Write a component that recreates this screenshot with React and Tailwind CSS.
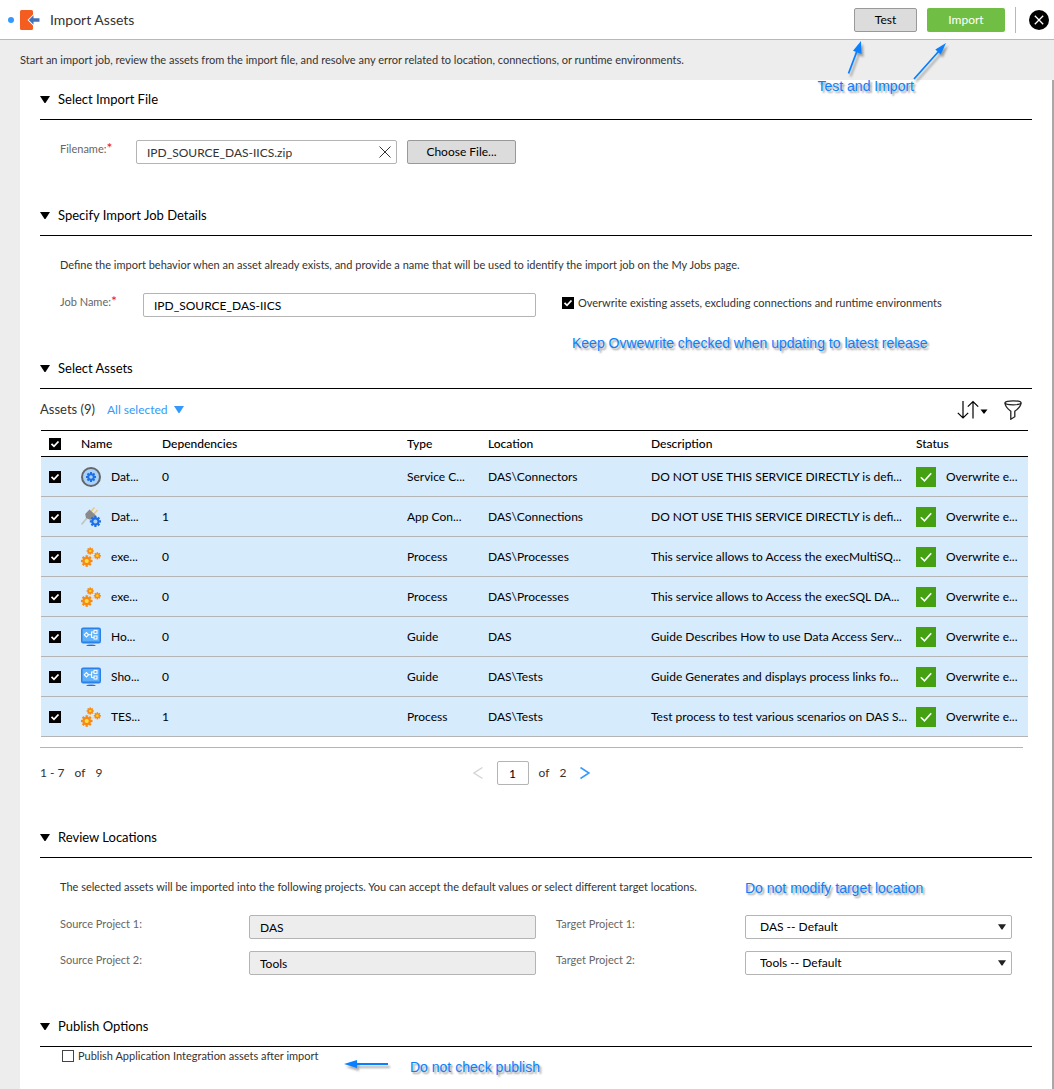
import React from "react";

const assets = [
  { icon: "service", name: "Dat...", deps: "0", type: "Service C...", location: "DAS\\Connectors", description: "DO NOT USE THIS SERVICE DIRECTLY is defi..." },
  { icon: "connection", name: "Dat...", deps: "1", type: "App Con...", location: "DAS\\Connections", description: "DO NOT USE THIS SERVICE DIRECTLY is defi..." },
  { icon: "process", name: "exe...", deps: "0", type: "Process", location: "DAS\\Processes", description: "This service allows to Access the execMultiSQ..." },
  { icon: "process", name: "exe...", deps: "0", type: "Process", location: "DAS\\Processes", description: "This service allows to Access the execSQL DA..." },
  { icon: "guide", name: "Ho...", deps: "0", type: "Guide", location: "DAS", description: "Guide Describes How to use Data Access Serv..." },
  { icon: "guide", name: "Sho...", deps: "0", type: "Guide", location: "DAS\\Tests", description: "Guide Generates and displays process links fo..." },
  { icon: "process", name: "TES...", deps: "1", type: "Process", location: "DAS\\Tests", description: "Test process to test various scenarios on DAS S..." },
];

function Triangle({ className }) {
  return (
    <svg viewBox="0 0 10 7" className={className} aria-hidden="true">
      <path d="M0 0h10L5.8 6.4q-.8 1-1.6 0z" fill="currentColor" />
    </svg>
  );
}

function Gear({ cx, cy, r, fill, hole }) {
  const teeth = [0, 45, 90, 135, 180, 225, 270, 315];
  return (
    <g>
      {teeth.map((a) => (
        <rect key={a} x={cx - r * 0.2} y={cy - r} width={r * 0.4} height={r * 0.5} fill={fill} transform={`rotate(${a} ${cx} ${cy})`} />
      ))}
      <circle cx={cx} cy={cy} r={r * 0.74} fill={fill} />
      <circle cx={cx} cy={cy} r={r * 0.36} fill={hole} />
    </g>
  );
}

function AssetIcon({ kind }) {
  return (
    <svg viewBox="0 0 20 20" className="size-5 shrink-0" aria-hidden="true">
      {kind === "service" && (
        <>
          <circle cx="10" cy="10" r="9" fill="#a9d3fb" stroke="#666" strokeWidth="2" />
          <Gear cx={10} cy={10} r={5} fill="#1f6fe5" hole="#a9d3fb" />
        </>
      )}
      {kind === "connection" && (
        <>
          <path d="M0.5 17.5L6 11" stroke="#c4c4c4" strokeWidth="1.8" />
          <path d="M10 4.5l3.5-4M13 7l3.5-4" stroke="#f5c56b" strokeWidth="1.4" />
          <path d="M8.5 2.5l6.5 6-2 3.5-4 .8L5 11l-.8-4z" fill="#8a8a8a" />
          <Gear cx={14.4} cy={14.4} r={5.6} fill="#1f6fe5" hole="#a9d3fb" />
        </>
      )}
      {kind === "process" && (
        <>
          <path d="M9 4l7 5-10 5z" fill="none" stroke="#e5d8c5" strokeWidth="1" />
          <Gear cx={9.2} cy={4} r={3.6} fill="#f88a12" hole="#ffd21f" />
          <Gear cx={16.4} cy={8.8} r={3.6} fill="#f88a12" hole="#ffd21f" />
          <Gear cx={5.7} cy={14} r={5.8} fill="#f88a12" hole="#ffe04a" />
        </>
      )}
      {kind === "guide" && (
        <>
          <rect x="0.75" y="1.25" width="18.5" height="14.5" rx="1.5" fill="#5fb0fa" stroke="#2b7fe8" strokeWidth="1.5" />
          <path d="M1.5 14.6h17" stroke="#3f92f0" strokeWidth="1" />
          <path d="M3.2 7.8L5.4 5.6l2.2 2.2-2.2 2.2zM7.6 7.8h3M13 5h-2.4v5.500H13" fill="none" stroke="#fff" strokeWidth="1.1" />
          <rect x="13" y="3.4" width="3" height="3" fill="none" stroke="#fff" />
          <rect x="13" y="9" width="3" height="3" fill="none" stroke="#fff" />
          <path d="M5 19q1-1.4 5-1.4t5 1.4z" fill="#1f6fe5" />
        </>
      )}
    </svg>
  );
}

function Checkbox({ id, label, checked = false }) {
  return (
    <span className="inline-grid size-3 shrink-0">
      <input
        id={id}
        type="checkbox"
        aria-label={label}
        defaultChecked={checked}
        className="peer col-start-1 row-start-1 size-3 appearance-none border border-[#444] bg-white checked:border-black checked:bg-black"
      />
      <svg viewBox="0 0 12 12" className="pointer-events-none invisible col-start-1 row-start-1 size-3 peer-checked:visible" aria-hidden="true">
        <path d="M2.5 5.8l2.5 2.5 4.5-4.8" fill="none" stroke="#fff" strokeWidth="1.8" />
      </svg>
    </span>
  );
}

function Note({ className, children }) {
  return (
    <span className={`whitespace-nowrap font-['Liberation_Sans',sans-serif] text-sm leading-5 text-[#0a80ff] [text-shadow:2px_2px_2px_#9a9a9a] ${className}`}>
      {children}
    </span>
  );
}

function Section({ title, className, children }) {
  return (
    <section className={`relative ${className}`}>
      <h2 className="h-10 border-b border-black">
        <button type="button" aria-expanded="true" className="flex h-full items-center gap-2 text-[13px] text-black">
          <Triangle className="h-[7px] w-2.5" />
          {title}
        </button>
      </h2>
      {children}
    </section>
  );
}

function Required() {
  return <span className="text-sm leading-none text-[#f0142d]">*</span>;
}

const fieldClass = "h-6 w-full min-w-0 rounded-xs border border-[#b4b4b4] px-2.5 text-black outline-none";
const labelClass = "shrink-0 text-[11px] leading-[18px] text-[#666]";

function ProjectRow({ number, name }) {
  return (
    <div className="grid grid-cols-2">
      <div className="flex pl-5">
        <label htmlFor={`source-${number}`} className={`w-[189px] ${labelClass}`}>{`Source Project ${number}:`}</label>
        <input id={`source-${number}`} readOnly defaultValue={name} className={`bg-[#ededed] ${fieldClass}`} />
      </div>
      <div className="flex px-5">
        <label htmlFor={`target-${number}`} className={`w-[189px] ${labelClass}`}>{`Target Project ${number}:`}</label>
        <span className="grid min-w-0 flex-1 items-center">
          <select id={`target-${number}`} className={`col-start-1 row-start-1 appearance-none bg-white pl-3.5 ${fieldClass}`}>
            <option>{`${name} -- Default`}</option>
          </select>
          <Triangle className="pointer-events-none col-start-1 row-start-1 mr-1.5 h-1.5 w-2 justify-self-end text-[#222]" />
        </span>
      </div>
    </div>
  );
}

export default function App() {
  return (
    <div className="relative flex min-h-screen flex-col bg-[#ededed] font-[Lato,sans-serif] text-xs text-[#333]">
      <header className="flex h-10 items-center border-b border-[#b8b8b8] bg-white pr-[5px] pl-2">
        <span className="size-1.5 rounded-full bg-[#3399ff]" />
        <svg viewBox="0 0 20 20" className="ml-1.5 size-5" aria-hidden="true">
          <path d="M1.5 0h10A1.5 1.5 0 0 1 13 1.5V4.500L7.500 10l5.500 5.500v3a1.500 1.500 0 0 1-1.500 1.500h-10A1.500 1.500 0 0 1 0 18.500v-17A1.500 1.500 0 0 1 1.500 0z" fill="#f55c20" />
          <path d="M8.800 10l4.700-4.700v3H19.500v3.400h-6v3z" fill="#4472b8" />
        </svg>
        <h1 className="ml-2.5 text-sm text-[#333]">Import Assets</h1>
        <div className="ml-auto flex items-center">
          <button type="button" className="h-6 w-[63px] rounded-xs border border-[#999] bg-[#dcdcdc] text-black">Test</button>
          <button type="button" className="ml-2.5 h-6 w-[78px] rounded-xs bg-[#70bf44] text-white">Import</button>
          <span className="ml-2.5 h-[26px] w-px bg-[#b8b8b8]" />
          <button type="button" aria-label="Close" className="ml-[13px]">
            <svg viewBox="0 0 20 20" className="size-5" aria-hidden="true">
              <circle cx="10" cy="10" r="10" fill="#000" />
              <path d="M5.800 5.800l8.400 8.400M14.200 5.800l-8.400 8.400" stroke="#fff" strokeWidth="1.300" />
            </svg>
          </button>
        </div>
      </header>

      <p className="flex min-h-10 items-center px-5 text-[11px]">
        Start an import job, review the assets from the import file, and resolve any error related to location, connections, or runtime environments.
      </p>

      <main className="ml-5 flex-1 border-r-2 border-[#a8a8a8] bg-white px-5">
        <Section title="Select Import File" className="mb-8">
          <div className="flex pt-5 pl-5">
            <label htmlFor="filename" className={`w-[76px] ${labelClass}`}>Filename:<Required /></label>
            <span className="grid w-[261px] items-center">
              <input id="filename" readOnly defaultValue="IPD_SOURCE_DAS-IICS.zip" className="col-start-1 row-start-1 h-6 w-full rounded-xs border border-[#b4b4b4] pr-8 pl-2.5 outline-none" />
              <button type="button" aria-label="Clear file" className="col-start-1 row-start-1 mr-1.5 justify-self-end">
                <svg viewBox="0 0 12 12" className="size-3" aria-hidden="true">
                  <path d="M.5.5l11 11M11.500.5l-11 11" stroke="#333" strokeWidth="1" />
                </svg>
              </button>
            </span>
            <button type="button" className="ml-2.5 h-6 w-[109px] rounded-xs border border-[#999] bg-[#dcdcdc] text-black">Choose File...</button>
          </div>
        </Section>

        <Section title="Specify Import Job Details" className="mb-0">
          <p className="pt-5 pl-5 text-[11px] leading-[18px]">
            Define the import behavior when an asset already exists, and provide a name that will be used to identify the import job on the My Jobs page.
          </p>
          <div className="grid h-[75px] grid-cols-2 pt-[19px]">
            <div className="flex pl-5">
              <label htmlFor="job" className={`w-[83px] ${labelClass}`}>Job Name:<Required /></label>
              <input id="job" defaultValue="IPD_SOURCE_DAS-IICS" className={fieldClass} />
            </div>
            <div className="flex flex-col gap-5 pl-[26px]">
              <div className="flex h-5 items-center gap-1">
                <Checkbox id="overwrite" checked />
                <label htmlFor="overwrite" className="text-[11px] whitespace-nowrap">Overwrite existing assets, excluding connections and runtime environments</label>
              </div>
              <Note className="pl-2.5">Keep Ovwewrite checked when updating to latest release</Note>
            </div>
          </div>
        </Section>

        <Section title="Select Assets" className="mb-5">
          <div className="flex h-[41px] items-center pr-2.5">
            <h3 className="text-[13px]">Assets (9)</h3>
            <button type="button" className="ml-3 flex items-center gap-1.5 text-[#3399ff]">
              All selected
              <Triangle className="h-[7px] w-2.5" />
            </button>
            <button type="button" aria-label="Sort" className="ml-auto">
              <svg viewBox="0 0 31 20" className="h-5 w-[31px]" fill="none" stroke="#000" strokeWidth="1.200" aria-hidden="true">
                <path d="M6 1v17M.8 12.800L6 18l5.200-5.200M16 18.500V1.500M10.800 6.700L16 1.500l5.200 5.200" />
                <path d="M23.500 9.500h7l-3.500 4.500z" fill="#000" stroke="none" />
              </svg>
            </button>
            <button type="button" aria-label="Filter" className="ml-4">
              <svg viewBox="0 0 18 20" className="h-5 w-[18px]" fill="none" stroke="#222" strokeWidth="1.300" aria-hidden="true">
                <ellipse cx="9" cy="2.800" rx="8" ry="2" />
                <path d="M1 2.800Q1 7 6.800 11.200V19.200l4-2.500v-5.500Q17 7 17 2.800" />
              </svg>
            </button>
          </div>
          <div className="pr-1 pl-px">
            <table className="w-full table-fixed border-collapse text-left text-black">
              <colgroup>
                <col className="w-10" />
                <col className="w-[81px]" />
                <col />
                <col className="w-[81px]" />
                <col className="w-[163px]" />
                <col className="w-[265px]" />
                <col className="w-[112px]" />
              </colgroup>
              <thead>
                <tr className="h-[26px] border-y border-black">
                  <th className="pl-2"><span className="flex items-center"><Checkbox label="Select all assets" checked /></span></th>
                  <th className="font-medium">Name</th>
                  <th className="font-medium">Dependencies</th>
                  <th className="font-medium">Type</th>
                  <th className="font-medium">Location</th>
                  <th className="font-medium">Description</th>
                  <th className="font-medium">Status</th>
                </tr>
              </thead>
              <tbody>
                {assets.map((a, i) => (
                  <tr key={i} className="h-10 border-b border-[#b4b4b4] bg-[#d6ebfc] whitespace-nowrap">
                    <td className="pl-2"><span className="flex items-center"><Checkbox label={`Select ${a.name}`} checked /></span></td>
                    <td><span className="flex items-center gap-2.5"><AssetIcon kind={a.icon} />{a.name}</span></td>
                    <td>{a.deps}</td>
                    <td>{a.type}</td>
                    <td>{a.location}</td>
                    <td>{a.description}</td>
                    <td>
                      <span className="flex items-center gap-2.5">
                        <svg viewBox="0 0 20 20" className="size-5 shrink-0" aria-hidden="true">
                          <path d="M0 0h20v20H0z" fill="#45a012" />
                          <path d="M4.800 10.200l3.700 3.700 6.700-7.600" fill="none" stroke="#fff" strokeWidth="1.600" />
                        </svg>
                        Overwrite e...
                      </span>
                    </td>
                  </tr>
                ))}
              </tbody>
            </table>
          </div>
          <div className="mt-2.5 mr-[9px] grid h-[51px] grid-cols-[1fr_auto_1fr] items-center border-t border-[#b4b4b4]">
            <span className="flex gap-2.5"><span>1 - 7</span><span>of</span><span>9</span></span>
            <div className="flex items-center">
              <button type="button" aria-label="Previous page" disabled>
                <svg viewBox="0 0 10 12" className="h-3 w-2.5" aria-hidden="true"><path d="M9.500.5L1 6l8.500 5.500" fill="none" stroke="#d4d4d4" strokeWidth="1.300" /></svg>
              </button>
              <input aria-label="Page" defaultValue="1" className="ml-3.5 h-6 w-8 rounded-xs border border-[#b4b4b4] text-center text-black outline-none" />
              <span className="ml-2.5">of</span>
              <span className="ml-2.5">2</span>
              <button type="button" aria-label="Next page" className="ml-3.5">
                <svg viewBox="0 0 10 12" className="h-3 w-2.5" aria-hidden="true"><path d="M.5.5L9 6 .5 11.500" fill="none" stroke="#3399ff" strokeWidth="1.600" /></svg>
              </button>
            </div>
          </div>
        </Section>

        <Section title="Review Locations" className="mb-8">
          <p className="pt-5 pl-5 text-[11px] leading-[18px]">
            The selected assets will be imported into the following projects. You can accept the default values or select different target locations.
          </p>
          <Note className="absolute top-[60px] left-[705px]">Do not modify target location</Note>
          <div className="flex flex-col gap-3 pt-[19px]">
            <ProjectRow number={1} name="DAS" />
            <ProjectRow number={2} name="Tools" />
          </div>
        </Section>

        <Section title="Publish Options">
          <div className="flex h-[18px] items-center gap-1 pl-[22px]">
            <Checkbox id="publish" />
            <label htmlFor="publish" className="text-[11px]">Publish Application Integration assets after import</label>
          </div>
          <svg viewBox="0 0 48 16" className="absolute top-[49px] left-[303px] h-4 w-12 overflow-visible drop-shadow-[2px_3px_1px_#0005]" aria-hidden="true">
            <path d="M12 8h33" stroke="#0a80ff" strokeWidth="1.800" />
            <path d="M1 8l13-4v8z" fill="#0a80ff" />
          </svg>
          <Note className="absolute top-[50px] left-[370px]">Do not check publish</Note>
        </Section>
      </main>

      <svg viewBox="0 0 110 44" className="pointer-events-none absolute top-10 right-[102px] h-11 w-[110px] overflow-visible drop-shadow-[2px_3px_1px_#0005]" aria-hidden="true">
        <path d="M6.500 33.500L15 11M72 39L97 11" stroke="#0a80ff" strokeWidth="1.800" />
        <path d="M19 1l.5 13-8.500-3.200zM104 3l-5.200 11.500-5.500-5z" fill="#0a80ff" />
      </svg>
      <Note className="absolute top-[76px] right-[140px]">Test and Import</Note>
    </div>
  );
}
